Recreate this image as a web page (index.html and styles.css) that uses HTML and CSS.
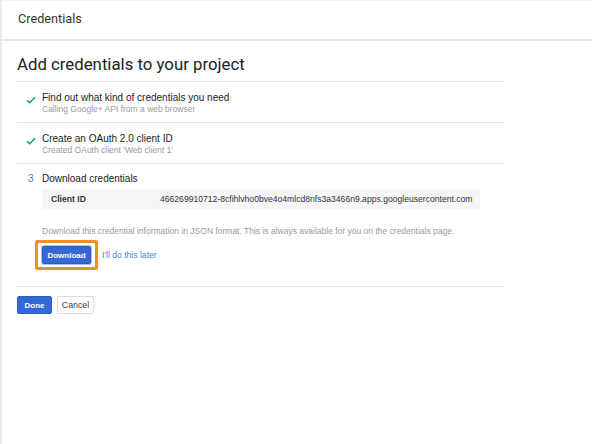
FILE: index.html
```html
<!DOCTYPE html>
<html>
<head>
<meta charset="utf-8">
<link rel="stylesheet" href="styles.css">
</head>
<body>
<div class="page">
  <header class="topbar">Credentials</header>
  <main class="content">
    <h1 class="title">Add credentials to your project</h1>
    <section class="step">
      <div class="marker">
        <svg width="10" height="8" viewBox="0 0 10 8"><path d="M1 4.2 L3.7 6.8 L9 1.2" fill="none" stroke="#0f9d58" stroke-width="1.5"/></svg>
      </div>
      <div class="body">
        <div class="step-title">Find out what kind of credentials you need</div>
        <div class="step-sub">Calling Google+ API from a web browser</div>
      </div>
    </section>
    <section class="step">
      <div class="marker">
        <svg width="10" height="8" viewBox="0 0 10 8"><path d="M1 4.2 L3.7 6.8 L9 1.2" fill="none" stroke="#0f9d58" stroke-width="1.5"/></svg>
      </div>
      <div class="body">
        <div class="step-title">Create an OAuth 2.0 client ID</div>
        <div class="step-sub">Created OAuth client 'Web client 1'</div>
      </div>
    </section>
    <section class="step step-open">
      <div class="marker num">3</div>
      <div class="body">
        <div class="step-title">Download credentials</div>
        <div class="idbox">
          <span class="id-label">Client ID</span>
          <span class="id-value">466269910712-8cfihlvho0bve4o4mlcd8nfs3a3466n9.apps.googleusercontent.com</span>
        </div>
        <div class="note">Download this credential information in JSON format. This is always available for you on the credentials page.</div>
        <div class="actions">
          <span class="highlight"><button class="btn primary">Download</button></span>
          <a class="link">I'll do this later</a>
        </div>
      </div>
    </section>
    <div class="footer">
      <button class="btn primary done">Done</button>
      <button class="btn secondary">Cancel</button>
    </div>
  </main>
</div>
</body>
</html>
```
FILE: styles.css
```css
html, body { margin: 0; padding: 0; background: #fff; }
body { font-family: "Liberation Sans", Arial, sans-serif; color: #222; }
.page { width: 592px; height: 444px; border-left: 2px solid #ececec; box-sizing: border-box; border-top: 1px solid #f4f4f4; }
.topbar {
  height: 40px; box-sizing: border-box; padding: 10px 0 0 16px;
  font-family: Roboto, sans-serif; font-size: 12.7px; color: #333;
  border-bottom: 2px solid #e8e8e8;
}
.content { padding: 0 0 0 15px; width: 487px; }
.title {
  margin: 0; padding: 12px 0 6px 0; font-family: Roboto, sans-serif; font-weight: 400;
  font-size: 16.8px; color: #222; border-bottom: 1px solid #e3e3e3; line-height: 22px;
}
.step { display: flex; border-bottom: 1px solid #e3e3e3; padding: 10px 0 7px 0; }
.marker { width: 25px; padding-left: 9px; box-sizing: border-box; padding-top: 2px; line-height: 10px; }
.marker.num { color: #4a7fd6; font-size: 10px; padding-left: 11px; padding-top: 0; line-height: 12px; }
.body { flex: 1; }
.step-title { font-size: 10px; color: #222; line-height: 12px; }
.step-sub { font-size: 8.5px; color: #999; line-height: 11px; }
.step-open { padding-top: 9px; padding-bottom: 16px; }
.idbox {
  margin-top: 4px; background: #f6f6f6; height: 20px; width: 438px; display: flex; align-items: center;
  font-size: 8.6px; color: #333;
}
.id-label { font-weight: bold; width: 118px; padding-left: 9px; box-sizing: border-box; }
.id-value { color: #333; white-space: nowrap; }
.note { margin-top: 17px; font-size: 8.5px; color: #999; line-height: 10px; white-space: nowrap; }
.actions { display: flex; align-items: center; margin-top: 4px; }
.highlight { border: 3px solid #f0901e; border-radius: 2px; padding: 3px 4px; margin-left: -7px; display: inline-flex; }
.btn { font-family: "Liberation Sans", Arial, sans-serif; font-size: 8px; font-weight: bold; border-radius: 2px; cursor: pointer; }
.primary { background: #3468d4; color: #fff; border: 1px solid #2c5cc4; height: 18px; padding: 0 8px; }
.highlight .primary { width: 49px; padding: 0; box-shadow: 0 0 0 1px #aac4f0; }
.link { color: #4a7fd6; font-size: 8.6px; margin-left: 4px; }
.footer { padding-top: 9px; display: flex; gap: 5px; }
.done { width: 35px; padding: 0; }
.secondary { background: #fff; color: #444; border: 1px solid #ddd; height: 18px; width: 37px; padding: 0; font-weight: normal; font-size: 8.8px; }
```
